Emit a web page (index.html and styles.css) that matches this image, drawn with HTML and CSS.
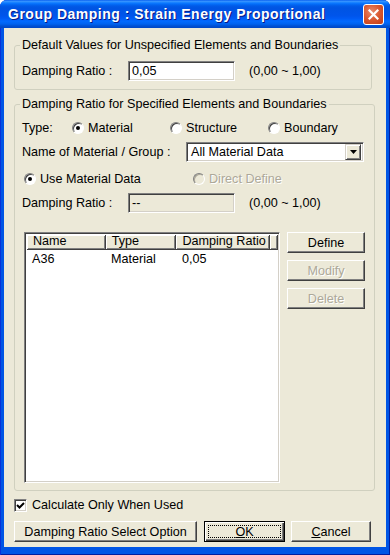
FILE: index.html
```html
<!DOCTYPE html>
<html lang="en">
<head>
    <meta charset="UTF-8">
    <title>Group Damping : Strain Energy Proportional</title>
    <link rel="stylesheet" href="styles.css">
</head>
<body>
    <div class="window">
        <div class="titlebar">
            <span class="title">Group Damping : Strain Energy Proportional</span>
            <span class="close">
                <svg width="11" height="11" viewBox="0 0 11 11"><path d="M1.5 1.5 L9.5 9.5 M9.5 1.5 L1.5 9.5" stroke="#fff" stroke-width="2.2" stroke-linecap="square"/></svg>
            </span>
        </div>

        <div class="body">
            <fieldset class="group group-default">
                <legend>Default Values for Unspecified Elements and Boundaries</legend>
                <div class="row">
                    <span class="label">Damping Ratio :</span>
                    <span class="edit">0,05</span>
                    <span class="range">(0,00 ~ 1,00)</span>
                </div>
            </fieldset>

            <fieldset class="group group-specified">
                <legend>Damping Ratio for Specified Elements and Boundaries</legend>

                <div class="row type-row">
                    <span class="type-label">Type:</span>
                    <span class="option"><span class="radio checked"></span>Material</span>
                    <span class="option"><span class="radio"></span>Structure</span>
                    <span class="option"><span class="radio"></span>Boundary</span>
                </div>

                <div class="row name-row">
                    <span class="name-label">Name of Material / Group :</span>
                    <span class="combo">
                        <span class="combo-text">All Material Data</span>
                        <span class="combo-btn">
                            <svg width="7" height="4" viewBox="0 0 7 4"><path d="M0 0 H7 L3.5 4 Z" fill="#000"/></svg>
                        </span>
                    </span>
                </div>

                <div class="row source-row">
                    <span class="option source-use"><span class="radio checked"></span>Use Material Data</span>
                    <span class="option disabled"><span class="radio"></span>Direct Define</span>
                </div>

                <div class="row">
                    <span class="label">Damping Ratio :</span>
                    <span class="edit edit-disabled">--</span>
                    <span class="range">(0,00 ~ 1,00)</span>
                </div>

                <div class="list-area">
                    <div class="listview">
                        <div class="lv-header">
                            <span class="lv-col col-name">Name</span>
                            <span class="lv-col col-type">Type</span>
                            <span class="lv-col col-ratio">Damping Ratio</span>
                            <span class="lv-col col-fill"></span>
                        </div>
                        <div class="lv-row">
                            <span class="col-name">A36</span>
                            <span class="col-type">Material</span>
                            <span class="col-ratio">0,05</span>
                        </div>
                    </div>
                    <div class="side-buttons">
                        <span class="btn">Define</span>
                        <span class="btn disabled">Modify</span>
                        <span class="btn disabled">Delete</span>
                    </div>
                </div>
            </fieldset>

            <div class="check-row">
                <span class="checkbox">
                    <svg width="9" height="9" viewBox="0 0 9 9"><path d="M1 4 L3.5 6.5 L8 2" stroke="#000" stroke-width="2" fill="none"/></svg>
                </span>
                Calculate Only When Used
            </div>

            <div class="button-row">
                <span class="btn btn-option">Damping Ratio Select Option</span>
                <span class="btn btn-default"><span class="focus"><u>O</u>K</span></span>
                <span class="btn btn-cancel"><u>C</u>ancel</span>
            </div>
        </div>
    </div>
</body>
</html>
```

FILE: styles.css
```css
* {
    box-sizing: border-box;
}
body {
    margin: 0;
    background: #ffffff;
    font-family: "Liberation Sans", Arial, sans-serif;
    font-size: 12.6px;
    color: #000000;
}
.window {
    width: 390px;
    height: 555px;
    display: flex;
    flex-direction: column;
    background: #0055e5;
    border-radius: 7px 7px 0 0;
    overflow: hidden;
    box-shadow: inset 1px 0 #0831d9, inset -1px 0 #001ea0, inset 0 -1px #001ea0;
}
.titlebar {
    height: 28px;
    flex: none;
    display: flex;
    align-items: center;
    justify-content: space-between;
    padding: 0 6px 0 8px;
    background: linear-gradient(to bottom, #0058ee 0%, #3a93ff 4%, #288eff 7%, #127dff 10%, #036ffc 14%, #0262ee 18%, #0057e5 24%, #0054e3 30%, #0055eb 56%, #005bf5 66%, #026afe 76%, #0062ef 86%, #0052d6 92%, #0046c4 100%);
}
.title {
    color: #ffffff;
    font-weight: bold;
    font-size: 14px;
    text-shadow: 1px 1px #0a1883;
    letter-spacing: 0.5px;
}
.close {
    width: 21px;
    height: 21px;
    border: 1px solid #ffffff;
    border-radius: 3px;
    background: radial-gradient(circle at 40% 35%, #e88a6c 0%, #d9572f 50%, #c23c16 100%);
    display: flex;
    align-items: center;
    justify-content: center;
    margin-top: 1px;
}
.body {
    flex: 1;
    margin: 0 4px 8px 4px;
    background: #ece9d8;
    padding: 10px 0 0 10px;
}

/* group boxes */
.group {
    width: 358px;
    margin: 0;
    border: 1px solid #d0d0bf;
    border-radius: 3px;
    padding: 9px 8px 8px 7px;
}
.group legend {
    padding: 0 2px;
    margin-left: -2px;
    line-height: 14px;
}
.group-specified {
    margin-top: 7px;
    padding-bottom: 7px;
}
.row {
    display: flex;
    align-items: center;
    height: 20px;
}
.label {
    width: 106px;
}
.edit {
    width: 107px;
    height: 20px;
    background: #ffffff;
    border: 1px solid;
    border-color: #808080 #ffffff #ffffff #808080;
    box-shadow: inset 1px 1px #404040, inset -1px -1px #d4d0c8;
    padding: 2px 0 0 3px;
    line-height: 14px;
}
.edit-disabled {
    background: #ece9d8;
}
.range {
    margin-left: 14px;
}

/* radio options */
.type-row {
    height: 16px;
}
.type-label {
    width: 50px;
}
.option {
    display: flex;
    align-items: center;
    gap: 4px;
    width: 98px;
}
.radio {
    width: 12px;
    height: 12px;
    flex: none;
    border-radius: 50%;
    background: #ffffff;
    border: 1px solid;
    border-color: #808080 #ffffff #ffffff #808080;
    box-shadow: inset 1px 1px #404040;
    display: flex;
    align-items: center;
    justify-content: center;
}
.radio.checked::after {
    content: "";
    width: 4px;
    height: 4px;
    border-radius: 50%;
    background: #000000;
}
.option.disabled {
    color: #aca899;
    text-shadow: 1px 1px #ffffff;
}
.option.disabled .radio {
    background: #ece9d8;
    box-shadow: inset 1px 1px #aca899;
}

/* combo */
.name-row {
    margin-top: 6px;
}
.name-label {
    width: 164px;
}
.combo {
    width: 178px;
    height: 20px;
    display: flex;
    align-items: center;
    justify-content: space-between;
    background: #ffffff;
    border: 1px solid;
    border-color: #808080 #ffffff #ffffff #808080;
    box-shadow: inset 1px 1px #404040, inset -1px -1px #d4d0c8;
    padding: 2px;
}
.combo-text {
    padding-left: 2px;
}
.combo-btn {
    width: 16px;
    height: 16px;
    background: #ece9d8;
    border: 1px solid;
    border-color: #d4d0c8 #404040 #404040 #d4d0c8;
    box-shadow: inset 1px 1px #ffffff, inset -1px -1px #808080;
    display: flex;
    align-items: center;
    justify-content: center;
}
.source-row {
    height: 16px;
    margin-top: 9px;
    padding-left: 2px;
}
.source-use {
    width: 169px;
}
.source-row + .row {
    margin-top: 6px;
}

/* list view */
.list-area {
    display: flex;
    gap: 7px;
    margin-top: 19px;
    padding-left: 2px;
}
.listview {
    width: 256px;
    height: 251px;
    background: #ffffff;
    border: 1px solid;
    border-color: #808080 #ffffff #ffffff #808080;
    box-shadow: inset 1px 1px #404040, inset -1px -1px #d4d0c8;
    padding: 2px 1px 0 2px;
}
.lv-header {
    display: flex;
    height: 15px;
}
.lv-col {
    background: #ece9d8;
    border-right: 1px solid #404040;
    border-bottom: 1px solid #404040;
    box-shadow: inset 1px 1px #ffffff, inset -1px -1px #808080;
    padding-left: 6px;
    line-height: 13px;
}
.col-name {
    width: 79px;
}
.col-type {
    width: 71px;
}
.col-ratio {
    width: 94px;
}
.col-fill {
    width: 8px;
}
.lv-row {
    display: flex;
    margin-top: 2px;
    line-height: 14px;
}
.lv-row span {
    padding-left: 5px;
}
.side-buttons {
    display: flex;
    flex-direction: column;
    gap: 7px;
}
.btn {
    width: 78px;
    height: 21px;
    display: flex;
    align-items: center;
    justify-content: center;
    background: #ece9d8;
    border: 1px solid;
    border-color: #ffffff #404040 #404040 #ffffff;
    box-shadow: inset -1px -1px #808080;
}
.btn.disabled {
    color: #aca899;
    text-shadow: 1px 1px #ffffff;
}

/* footer */
.check-row {
    display: flex;
    align-items: center;
    gap: 5px;
    height: 14px;
    margin-top: 7px;
}
.checkbox {
    width: 13px;
    height: 13px;
    background: #ffffff;
    border: 1px solid;
    border-color: #808080 #ffffff #ffffff #808080;
    box-shadow: inset 1px 1px #404040, inset -1px -1px #d4d0c8;
    display: flex;
    align-items: center;
    justify-content: center;
}
.button-row {
    display: flex;
    gap: 7px;
    margin-top: 9px;
}
.btn-option {
    width: 183px;
}
.btn-default {
    width: 81px;
    border: 1px solid #000000;
    box-shadow: inset 1px 1px #ffffff, inset -1px -1px #404040, inset -2px -2px #808080;
    padding: 3px;
}
.focus {
    width: 100%;
    height: 100%;
    border: 1px dotted #000000;
    display: flex;
    align-items: center;
    justify-content: center;
}
.btn-cancel {
    width: 80px;
    margin-left: -1px;
}
```
